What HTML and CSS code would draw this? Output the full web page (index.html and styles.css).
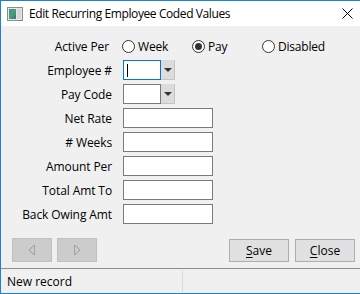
FILE: index.html
```html
<!DOCTYPE html>
<html lang="en">
<head>
    <meta charset="UTF-8">
    <meta name="viewport" content="width=device-width, initial-scale=1.0">
    <title>Edit Recurring Employee Coded Values</title>
    <link rel="stylesheet" href="styles.css">
</head>
<body>
    <div class="window">
        <div class="titlebar">
            <svg class="app-icon" width="16" height="14" viewBox="0 0 16 14">
                <defs>
                    <linearGradient id="pane" x1="0" y1="0" x2="1" y2="1">
                        <stop offset="0" stop-color="#3c8fb0"/>
                        <stop offset="0.5" stop-color="#4aa36a"/>
                        <stop offset="1" stop-color="#2f6fa8"/>
                    </linearGradient>
                </defs>
                <rect x="0.5" y="0.5" width="15" height="13" fill="#e8e8e8" stroke="#8c8c8c"/>
                <rect x="2" y="2" width="7" height="10" fill="url(#pane)"/>
                <rect x="10" y="2" width="4" height="10" fill="#d4d8dc"/>
            </svg>
            <span class="title">Edit Recurring Employee Coded Values</span>
            <svg class="close-x" width="11" height="11" viewBox="0 0 11 11">
                <path d="M0.5 0.5 L10.5 10.5 M10.5 0.5 L0.5 10.5" stroke="#000" stroke-width="1"/>
            </svg>
        </div>

        <div class="content">
            <form class="fields">
                <span class="label label-active">Active Per</span>
                <div class="radios">
                    <label class="radio"><span class="dot"></span>Week</label>
                    <label class="radio"><span class="dot checked"></span>Pay</label>
                    <label class="radio"><span class="dot"></span>Disabled</label>
                </div>

                <span class="label">Employee #</span>
                <div class="combo">
                    <div class="combo-box focused"><span class="caret"></span></div>
                    <div class="combo-btn"><span class="arrow"></span></div>
                </div>

                <span class="label">Pay Code</span>
                <div class="combo">
                    <div class="combo-box"></div>
                    <div class="combo-btn"><span class="arrow"></span></div>
                </div>

                <span class="label">Net Rate</span>
                <div class="textbox"></div>

                <span class="label"># Weeks</span>
                <div class="textbox"></div>

                <span class="label">Amount Per</span>
                <div class="textbox"></div>

                <span class="label">Total Amt To</span>
                <div class="textbox"></div>

                <span class="label">Back Owing Amt</span>
                <div class="textbox"></div>
            </form>

            <div class="buttons">
                <div class="nav">
                    <div class="nav-btn"><span class="tri tri-left"></span></div>
                    <div class="nav-btn"><span class="tri tri-right"></span></div>
                </div>
                <div class="actions">
                    <div class="btn"><u>S</u>ave</div>
                    <div class="btn"><u>C</u>lose</div>
                </div>
            </div>
        </div>

        <div class="statusbar">
            <div class="status-main">New record</div>
            <div class="status-side"></div>
        </div>
    </div>
</body>
</html>
```

FILE: styles.css
```css
body {
    margin: 0;
    font-family: "Open Sans", "Noto Sans", sans-serif;
    font-size: 12px;
    color: #000;
}
.window {
    width: 360px;
    height: 294px;
    box-sizing: border-box;
    border-left: 1px solid #1883d7;
    border-top: 1px solid #1883d7;
    border-bottom: 1px solid #1883d7;
    background: #f0f0f0;
    display: flex;
    flex-direction: column;
}
.titlebar {
    height: 25px;
    background: #fff;
    display: flex;
    align-items: center;
    padding-left: 6px;
}
.app-icon {
    margin-right: 6px;
}
.title {
    font-size: 12px;
    letter-spacing: -0.4px;
    flex: 1;
}
.close-x {
    margin-right: 7px;
}
.content {
    flex: 1;
    display: flex;
    flex-direction: column;
    padding-top: 10px;
}
.fields {
    display: grid;
    grid-template-columns: 111px auto;
    grid-auto-rows: 20px;
    column-gap: 11px;
    row-gap: 4px;
    align-items: center;
    margin: 0;
}
.label {
    text-align: right;
    white-space: nowrap;
    letter-spacing: -0.1px;
}
.label-active {
    padding-right: 3px;
}
.radios {
    display: flex;
    align-items: center;
    margin-left: -1px;
}
.radio {
    display: flex;
    align-items: center;
    width: 70px;
    letter-spacing: -0.2px;
}
.dot {
    width: 11px;
    height: 11px;
    border: 1px solid #333;
    border-radius: 50%;
    background: #fff;
    margin-right: 3px;
    position: relative;
}
.dot.checked::after {
    content: "";
    position: absolute;
    left: 2px;
    top: 2px;
    width: 7px;
    height: 7px;
    border-radius: 50%;
    background: #333;
}
.combo {
    display: flex;
    height: 20px;
}
.combo-box {
    width: 36px;
    height: 18px;
    border: 1px solid #7a7a7a;
    background: #fff;
    position: relative;
}
.combo-box.focused {
    border-color: #0078d7;
}
.caret {
    position: absolute;
    left: 3px;
    top: 3px;
    width: 1px;
    height: 13px;
    background: #000;
}
.combo-btn {
    width: 13px;
    height: 19px;
    background: #dcdcdc;
    border-right: 1px solid #c4c4c4;
    border-bottom: 1px solid #c4c4c4;
    display: flex;
    align-items: center;
    justify-content: center;
}
.arrow {
    width: 0;
    height: 0;
    border-left: 4px solid transparent;
    border-right: 4px solid transparent;
    border-top: 4px solid #333;
}
.textbox {
    width: 88px;
    height: 18px;
    border: 1px solid #7a7a7a;
    background: #fff;
}
.buttons {
    display: flex;
    justify-content: space-between;
    margin-top: 14px;
    padding: 0 5px 0 11px;
}
.nav {
    display: flex;
    gap: 5px;
}
.nav-btn {
    width: 38px;
    height: 22px;
    background: #cccccc;
    border: 1px solid #bfbfbf;
    display: flex;
    align-items: center;
    justify-content: center;
}
.tri {
    width: 5px;
    height: 10px;
}
.tri-left {
    background: linear-gradient(to bottom right, transparent 49%, #a0a0a0 50%, transparent 62%) top / 100% 50% no-repeat,
                linear-gradient(to top right, transparent 49%, #a0a0a0 50%, transparent 62%) bottom / 100% 50% no-repeat;
    border-right: 1px solid #a0a0a0;
}
.tri-right {
    background: linear-gradient(to bottom left, transparent 49%, #a0a0a0 50%, transparent 62%) top / 100% 50% no-repeat,
                linear-gradient(to top left, transparent 49%, #a0a0a0 50%, transparent 62%) bottom / 100% 50% no-repeat;
    border-left: 1px solid #a0a0a0;
}
.actions {
    display: flex;
    gap: 6px;
    margin-top: 1px;
}
.btn {
    width: 58px;
    height: 21px;
    background: #e1e1e1;
    border: 1px solid #adadad;
    display: flex;
    align-items: center;
    justify-content: center;
}
.btn u {
    text-underline-offset: 2px;
}
.statusbar {
    height: 24px;
    border-top: 1px solid #8c8c8c;
    display: flex;
}
.status-main {
    width: 175px;
    padding-left: 6px;
    display: flex;
    align-items: center;
}
.status-side {
    flex: 1;
    border-left: 1px solid #dadada;
    margin: 1px 0;
}
```
